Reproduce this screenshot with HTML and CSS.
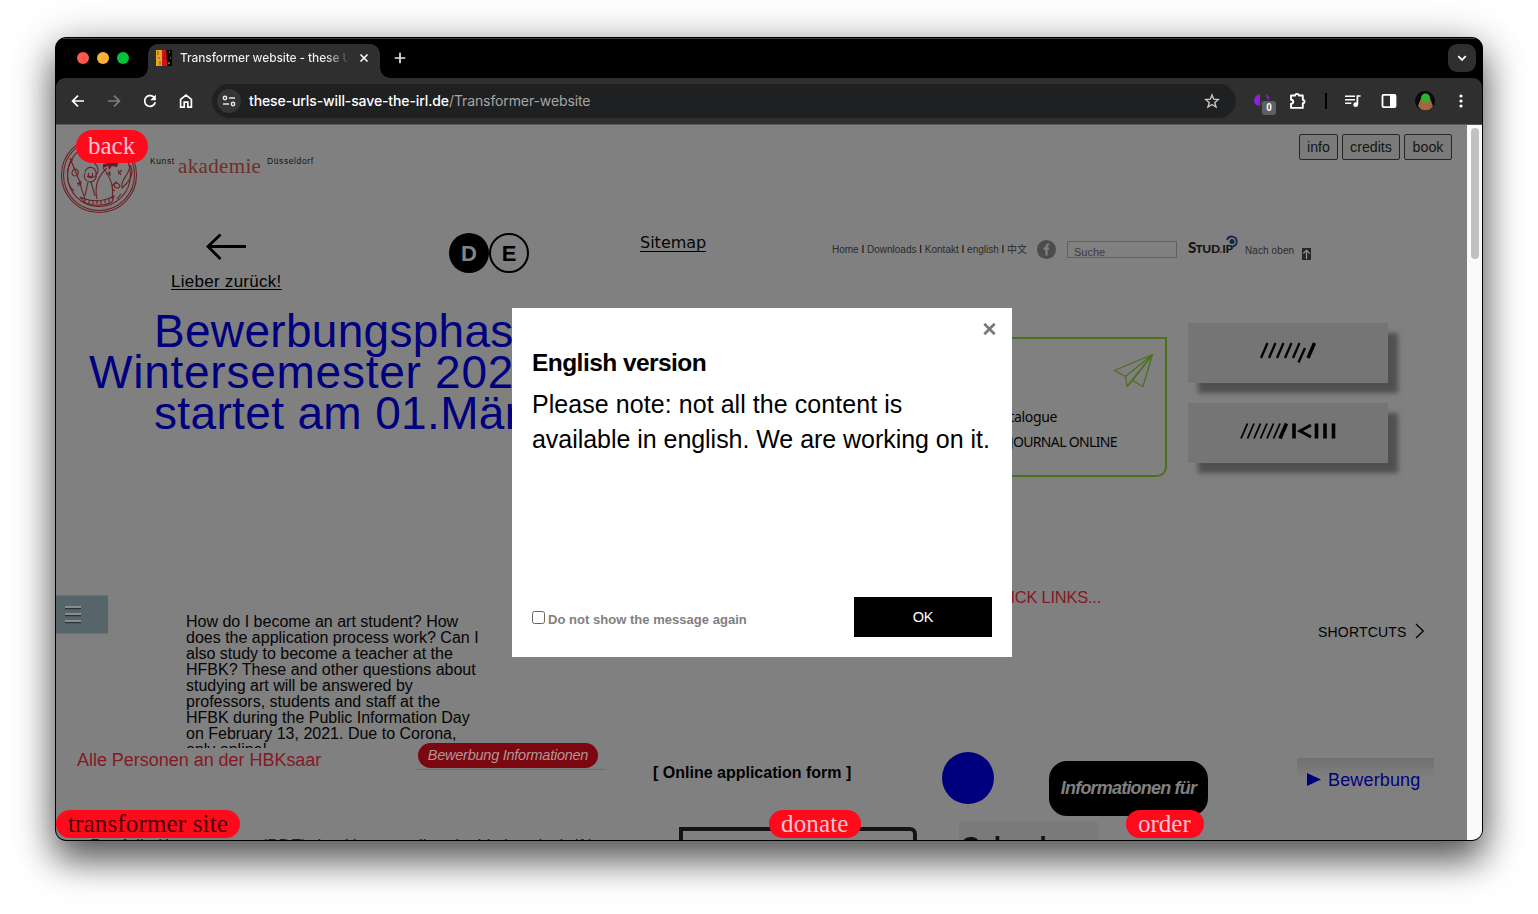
FILE: index.html
```html
<!DOCTYPE html>
<html lang="de">
<head>
<meta charset="utf-8">
<title>Transformer website</title>
<link rel="stylesheet" href="styles.css">
</head>
<body>
<div class="window">
  <header class="tabs">
    <div class="lights"><i class="red"></i><i class="yellow"></i><i class="green"></i></div>
    <div class="tab">
      <svg class="favicon" width="16" height="16" viewBox="0 0 16 16"><path fill="#e8a723" d="M0 0h6v16H0z"/><path fill="#d3111c" d="M6 0h5v16H6z"/><path fill="#600" d="M10 0h1v10h-1z"/><path fill="#000" d="M11 0h5v16h-5z"/><path d="M2 1v4M4 11v4M3 7v2" stroke="#8d4b10"/><path d="M8 3h1M7 8h2" stroke="#7c0b10"/><path d="M13 2h1M12 13h2M14 8h1" stroke="#bbb"/></svg>
      <span class="tab-title">Transformer website - these U</span>
      <svg class="tab-close" width="10" height="10" viewBox="0 0 10 10"><path d="M1.500 1.500l7 7M8.500 1.500l-7 7" stroke="#fff" stroke-width="1.600"/></svg>
    </div>
    <svg class="plus" width="12" height="12" viewBox="0 0 12 12"><path d="M6 .8v10.400M.8 6h10.400" stroke="#e6e6e6" stroke-width="1.700"/></svg>
    <div class="tab-search"><svg width="10" height="7" viewBox="0 0 10 7"><path d="M1.200 1.200L5 5l3.800-3.800" fill="none" stroke="#fff" stroke-width="1.800"/></svg></div>
  </header>
  <nav class="toolbar">
    <svg class="nav-icon" width="16" height="16" viewBox="0 0 16 16"><path d="M14 8H3M8 2.600L2.600 8 8 13.400" fill="none" stroke="#fff" stroke-width="1.700"/></svg>
    <svg class="nav-icon" width="16" height="16" viewBox="0 0 16 16"><path d="M2 8h11M8 2.600L13.400 8 8 13.400" fill="none" stroke="#7d7d7d" stroke-width="1.700"/></svg>
    <svg class="nav-icon" width="16" height="16" viewBox="0 0 16 16"><path d="M12.600 5A5.400 5.400 0 1 0 13.300 9.200" fill="none" stroke="#fff" stroke-width="1.800"/><path d="M13.900 1.600v5.600H8.300z" fill="#fff"/></svg>
    <svg class="nav-icon" width="16" height="16" viewBox="0 0 16 16"><path d="M2.600 14.200V6.300L8 2l5.400 4.300v7.900H9.800V9.200H6.200v5z" fill="none" stroke="#fff" stroke-width="1.700"/></svg>
    <div class="address">
      <span class="site-info"><svg width="14" height="12" viewBox="0 0 14 12"><g fill="none" stroke="#e4e4e4" stroke-width="1.500"><circle cx="3" cy="3" r="1.700"/><path d="M7 3h6M1 9h6"/><circle cx="11" cy="9" r="1.700"/></g></svg></span>
      <span class="url"><b>these-urls-will-save-the-irl.de</b>/Transformer-website</span>
      <svg class="star" width="16" height="16" viewBox="0 0 16 16"><path d="M8 1.900l1.700 4.300 4.700.3-3.600 3 1.200 4.500L8 11.500 4 14l1.200-4.500-3.600-3 4.700-.3z" fill="none" stroke="#c7c7c7" stroke-width="1.400"/></svg>
    </div>
    <div class="extensions">
      <span class="ext"><svg width="17" height="14" viewBox="0 0 17 14"><path fill="#8f1fd6" d="M6 1v12C2.500 13 0 10.800 0 7.600S2.500 2 6 1zM7.500 7l2 5.500h-2zM11.500 1c2.500 1.200 4 3 4 6L13.500 6z"/></svg><em>0</em></span>
      <svg width="18" height="18" viewBox="0 0 18 18"><path d="M2 3.500h4.200c0-2.200 3.600-2.200 3.600 0h4v4.400c2.300 0 2.300 3.200 0 3.200v4.800H2v-4.200c3-.1 3-3.900 0-4z" fill="none" stroke="#fff" stroke-width="1.900" stroke-linejoin="round"/></svg>
      <i class="divider"></i>
      <svg width="16" height="13" viewBox="0 0 16 13"><path d="M0 1.200h10M0 4.700h10M0 8.200h6.300" stroke="#fff" stroke-width="1.600"/><path d="M12.200 1h3.400M12.400.300v9" stroke="#fff" stroke-width="1.700"/><circle cx="10.700" cy="9.700" r="2.400" fill="#fff"/></svg>
      <svg width="16" height="16" viewBox="0 0 16 16"><rect x="1.500" y="1.900" width="13" height="12.200" rx="1" fill="none" stroke="#fff" stroke-width="1.800"/><path d="M9 2h5v12H9z" fill="#fff"/></svg>
      <svg width="20" height="20" viewBox="0 0 20 20"><circle cx="10" cy="10" r="10" fill="#080808"/><path d="M3 15c2-6 4-11 8-11 4 1 5 6 7 11-3 6-12 6-15 0z" fill="#96693f"/><circle cx="10.500" cy="7" r="4.500" fill="#2cb52a"/><path d="M5 15l6-3 5 2M6 17l8-1M8 12l5 5" stroke="#bd6250" fill="none"/></svg>
      <svg width="4" height="14" viewBox="0 0 4 14"><g fill="#fff"><circle cx="2" cy="2" r="1.600"/><circle cx="2" cy="7" r="1.600"/><circle cx="2" cy="12" r="1.600"/></g></svg>
    </div>
  </nav>
  <main class="viewport">
    <div class="collage">
      <svg class="item seal" width="78" height="78" viewBox="0 0 78 78"><g fill="none" stroke="#6d2024" stroke-width="1.100"><circle cx="39" cy="39" r="37.500"/><circle cx="39" cy="39" r="35.500"/><circle cx="39" cy="39" r="31.500"/><path d="M18 17c10 6 18 8 20 16 0 9-8 10-11 7M10 22l11 27M13 23c-8 10-7 26 1 32M25 37a6 6 0 1 0 11 1 5.500 5.500 0 0 0-11-2M29 37a2.200 2.200 0 1 0 3 0M43 32c7 8 11 19 9 31M47 32c-9 8-13 18-10 31M21 45c-2 6 2 10 4 18M28 46l-3 14M31 46l4 14M70 29c5 8 0 16-8 23-2-9 8-13 8-23M57 46a3 3 0 1 0 3 4 4 4 0 1 0-5 5M46 38l5-1M49 35l1 5M17 47l4 2M20 45l-2 5M58 34l3 5M62 34l-4 4M57 63l4-5M20 61c11 5 23 5 34-1l-2 6c-8 4-18 4-27 1zM25 63v4M29 64v4M33 64v4M37 64v4M41 64v4M45 63v4M49 62v4M13 34c5-4 8 6 2 6-3 0-4-3-2-6"/></g><path d="M43 28l16-3-2 6-5-1-3 4-1-4-5 2z" fill="#6d1a20"/></svg>
      <span class="item kunst">Kunst</span>
      <span class="item akademie">akademie</span>
      <span class="item duesseldorf">Düsseldorf</span>
      <div class="item page-buttons"><button class="b-info">info</button><button class="b-credits">credits</button><button class="b-book">book</button></div>

      <svg class="item arrow" width="42" height="28" viewBox="0 0 42 28"><path d="M41 13.500H3M15.500 1.500L3 13.500l12.500 12.500" fill="none" stroke="#000" stroke-width="2.800"/></svg>
      <a class="item lieber">Lieber zurück!</a>
      <span class="item letter letter-d">D</span>
      <span class="item letter letter-e">E</span>
      <a class="item sitemap">Sitemap</a>

      <span class="item meta-nav">Home <b>I</b> Downloads <b>I</b> Kontakt <b>I</b> english <b>I</b> 中文</span>
      <svg class="item facebook" width="20" height="20" viewBox="0 0 20 20"><circle cx="10.500" cy="10.500" r="9.500" fill="#4c4c4c"/><path d="M10.500 16.500V7.700c0-1.800.7-2.300 2.700-2.200M7.500 9.700h5.300" fill="none" stroke="#808080" stroke-width="2.200"/></svg>
      <div class="item suche">Suche</div>
      <span class="item studip">S<small>TUD<i>.</i>IP</small></span>
      <svg class="item studip-dot" width="14" height="14" viewBox="0 0 14 14"><circle cx="7" cy="6.500" r="2.500" fill="#142848"/><path d="M2 5A5 5 0 1 1 7.500 11.500" fill="none" stroke="#142848" stroke-width="1.800"/></svg>
      <span class="item nach-oben">Nach oben</span>
      <svg class="item up" width="9" height="12" viewBox="0 0 9 12"><path fill="#272727" d="M0 0h9v12H0z"/><path d="M4.500 11V3M1.300 5.500l3.200-3.300 3.200 3.300" fill="none" stroke="#999" stroke-width="1.100"/></svg>

      <h1 class="item headline"><span class="l1">Bewerbungsphase</span><span class="l2">Wintersemester 2021</span><span class="l3">startet am 01.März</span></h1>

      <section class="item catalogue">
        <span class="cat-plane"><svg width="41" height="36" viewBox="0 0 41 36"><path d="M39.500 1.500L1.500 17.500l11 6zM39.500 1.500l-9.500 32-10.500-6zM12.500 23.500l1.500 10 25.500-32M14 33.500l5.500-6" fill="none" stroke="#4c701b" stroke-width="1.300" stroke-linejoin="round"/></svg></span>
        <span class="cat-a">Catalogue</span><span class="cat-b">JOURNAL ONLINE</span>
      </section>
      <div class="item slab slab-a"><svg width="58" height="22" viewBox="0 0 58 22"><path d="M2 17L8.500 2M10 17l6.500-15M18 17l6.500-15M26 17l6.500-15M34 17l6.500-15M39.500 21.500L46 7" stroke="#000" stroke-width="2.300"/><path d="M49 17l6.500-15" stroke="#000" stroke-width="3.400"/></svg></div>
      <div class="item slab slab-b"><svg width="96" height="18" viewBox="0 0 96 18"><path d="M1 16.500L7.500 1.500M7.500 16.500l6.500-15M14 16.500l6.500-15M20.500 16.500l6.500-15M27 16.500l6.500-15M33.500 16.500L40 1.500" stroke="#000" stroke-width="1.800"/><path d="M40 16.500l6.500-15M54 1.500v15M76.500 1.500v15M85 1.500v15M93.500 1.500v15" stroke="#000" stroke-width="3.600"/><path d="M71 3L60 9l11 6" fill="none" stroke="#000" stroke-width="3"/></svg></div>

      <svg class="item burger" width="52" height="39" viewBox="0 0 52 39"><path fill="#56656a" d="M0 .5h52v38H0z"/><path d="M9 13.500h16M9 20.500h16M9 27.500h16" stroke="#2d3336" stroke-width="1.500"/><path d="M9 12h16M9 19h16M9 26h16" stroke="#9a9c9d" stroke-width="1.600"/></svg>
      <p class="item story">How do I become an art student? How<br>does the application process work? Can I<br>also study to become a teacher at the<br>HFBK? These and other questions about<br>studying art will be answered by<br>professors, students and staff at the<br>HFBK during the Public Information Day<br>on February 13, 2021. Due to Corona,<br>only online!</p>
      <span class="item quick">QUICK LINKS...</span>
      <span class="item shortcuts">SHORTCUTS</span>
      <svg class="item chevron" width="10" height="16" viewBox="0 0 10 16"><path d="M1 1l7.200 7L1 15" fill="none" stroke="#000" stroke-width="1.300"/></svg>
      <span class="item personen">Alle Personen an der HBKsaar</span>
      <div class="item infos-frame"><span class="infos">Bewerbung Informationen</span></div>
      <span class="item form-link">[ Online application form ]</span>
      <i class="item blue-dot"></i>
      <span class="item black-pill">Informationen für</span>
      <span class="item bewerbung"><svg width="14" height="14" viewBox="0 0 14 14"><path fill="#00007f" d="M0 0L14 6.500 0 13z"/></svg><span>Bewerbung</span></span>
      <i class="item black-frame"></i>
      <span class="item calendar">Calendar</span>
      <span class="item cut-line">Portfolio Kommentare (PDF) das Hauptstudium im Verbandschrift)</span>

      <span class="item pill back">back</span>
      <span class="item pill transformer">transformer site</span>
      <span class="item pill donate">donate</span>
      <span class="item pill order">order</span>

      <section class="item modal">
        <span class="close"><svg width="13" height="12" viewBox="0 0 13 12"><path d="M1.300 .8l10.400 10.400M11.700 .8L1.300 11.200" stroke="#777" stroke-width="2.700"/></svg></span>
        <h2>English version</h2>
        <p><span class="p1">Please note: not all the content is</span><br><span class="p2">available in english. We are working on it.</span></p>
        <footer><label><i class="check"></i><span>Do not show the message again</span></label><button>OK</button></footer>
      </section>
    </div>
    <div class="scrollbar"><i></i></div>
  </main>
</div>
</body>
</html>
```

FILE: styles.css
```css
* { box-sizing: border-box; }
body { margin: 0; width: 1538px; height: 914px; overflow: hidden; background: #fff; font-family: "Liberation Sans", Arial, sans-serif; padding: 37px 55px; }
.window { width: 1428px; height: 804px; border: 1px solid #000; border-radius: 11px; overflow: hidden; display: flex; flex-direction: column; background: #000; box-shadow: 0 20px 36px rgba(0,0,0,.58), 0 4px 44px rgba(0,0,0,.26); }

.tabs { height: 40px; flex: none; display: flex; align-items: center; background: #000; border-top: 1px solid #404040; padding-bottom: 1px; }
.lights { display: flex; gap: 8px; width: 92px; padding-left: 21px; flex: none; }
.lights i { width: 12px; height: 12px; border-radius: 50%; }
.red { background: #ff5750; }
.yellow { background: #ffb13c; }
.green { background: #05c23d; }
.tab { position: relative; align-self: flex-end; width: 232px; height: 34px; margin-bottom: -1px; background: #2f2f2f; border-radius: 10px 10px 0 0; display: flex; align-items: center; padding: 0 10px 6px 8px; }
.tab::before, .tab::after { content: ""; position: absolute; bottom: 0; width: 10px; height: 10px; }
.tab::before { left: -10px; background: radial-gradient(circle at 0 0, transparent 9.5px, #2f2f2f 10px); }
.tab::after { right: -10px; background: radial-gradient(circle at 100% 0, transparent 9.5px, #2f2f2f 10px); }
.tab-title { margin-left: 8px; width: 167px; overflow: hidden; white-space: nowrap; font: 500 12px/16px Inter, sans-serif; letter-spacing: -.12px; background: linear-gradient(90deg, #f2f2f2 145px, #2f2f2f 171px); -webkit-background-clip: text; background-clip: text; color: transparent; }
.tab-close { margin-left: 12px; }
.plus { margin-left: 14px; }
.tab-search { margin-left: auto; margin-right: 6px; width: 28px; height: 28px; border-radius: 9px; background: #2f2f2f; display: flex; align-items: center; justify-content: center; }

.toolbar { height: 47px; flex: none; background: #2f2f2f; border-radius: 9px 9px 0 0; display: flex; align-items: center; padding-left: 14px; border-bottom: 1px solid #5c5c5c; }
.nav-icon { margin-right: 20px; flex: none; }
.address { width: 1024px; height: 34px; margin-left: -2px; border-radius: 17px; background: #1f2022; display: flex; align-items: center; padding: 0 16px 0 5px; flex: none; margin-right: 18px; }
.site-info { width: 24px; height: 24px; border-radius: 50%; background: #343536; display: flex; align-items: center; justify-content: center; }
.url { margin-left: 8px; font: 400 14px/20px Inter, sans-serif; letter-spacing: -.11px; color: #a6a6a6; }
.url b { font-weight: 500; color: #fff; }
.star { margin-left: auto; }
.extensions { display: grid; grid-template-columns: 27px 38px 17px 37px 35px 37px 35px; align-items: center; justify-items: center; margin-left: -2px; }
.ext { position: relative; width: 23px; height: 22px; padding-top: 3px; display: block; }
.ext em { position: absolute; left: 8px; top: 11px; width: 14px; height: 14px; border-radius: 3px; background: #5d6164; color: #fff; font: bold 10px/14px "Liberation Sans", sans-serif; text-align: center; }
.divider { width: 2px; height: 16px; background: #000; }

.viewport { position: relative; flex: 1; background: #808080; overflow: hidden; display: flex; justify-content: flex-end; }
.scrollbar { position: relative; width: 15px; background: #fafafa; padding: 3px 0 0 4px; }
.scrollbar i { display: block; width: 8px; height: 131px; border-radius: 4px; background: #c1c1c1; }

/* Free collage: its origin is the top left corner of the desktop. */
.collage { position: absolute; left: -56px; top: -125px; width: 1523px; height: 970px; }
.item { position: absolute; white-space: nowrap; line-height: 1; margin: 0; }

.seal { left: 60px; top: 136px; }
.kunst, .duesseldorf { top: 157px; font-size: 8.5px; letter-spacing: .6px; color: #111; }
.kunst { left: 150px; }
.duesseldorf { left: 267px; }
.akademie { left: 178px; top: 156px; font-family: "Liberation Serif", serif; font-size: 21px; letter-spacing: .35px; color: #6f2d2c; }
.page-buttons { right: 71px; top: 134px; display: flex; gap: 4px; }
.page-buttons button { height: 26px; border: 1px solid #262626; border-radius: 2px; background: #7a7a7a; padding: 0; font: 14.2px/1 "Liberation Sans", sans-serif; color: #151515; }
.b-info { width: 39px; }
.b-credits { width: 58px; }
.b-book { width: 48px; }

.arrow { left: 205px; top: 233px; }
.lieber { left: 171px; top: 273px; font-size: 17px; letter-spacing: .27px; text-decoration: underline; text-underline-offset: 2px; }
.letter { top: 233px; width: 40px; height: 40px; border-radius: 50%; text-align: center; font-weight: bold; font-size: 22px; line-height: 41px; }
.letter-d { left: 449px; background: #000; color: #858585; }
.letter-e { left: 489px; border: 2.5px solid #000; line-height: 37px; }
.sitemap { left: 640px; top: 235px; font: 16px/1 "DejaVu Sans", sans-serif; color: #050505; border-bottom: 1px solid #000; height: 17px; }

.meta-nav { left: 832px; top: 244px; font: 10px/11px "Liberation Sans", "Noto Sans CJK SC", sans-serif; color: #2b2b2b; }
.meta-nav b { font-weight: normal; color: #000; }
.facebook { left: 1036px; top: 239px; }
.suche { left: 1067px; top: 241px; width: 110px; height: 17px; border: 1px solid #606060; padding: 5px 0 0 6px; font-size: 11px; color: #3b3b3b; }
.studip { left: 1188px; top: 240px; font: 900 15px/15px Lato, sans-serif; letter-spacing: -.75px; color: #161616; }
.studip small { font-size: 12px; letter-spacing: -.4px; }
.studip i { color: #a01010; }
.studip-dot { left: 1225px; top: 235px; }
.nach-oben { left: 1245px; top: 246px; font-size: 10px; letter-spacing: .1px; color: #2b2b2b; }
.up { left: 1302px; top: 248px; }

.headline { left: 89px; top: 311px; width: 440px; font-size: 46px; line-height: 41px; font-weight: 400; color: #00007f; display: flex; flex-direction: column; }
.l1 { padding-left: 65px; letter-spacing: .3px; }
.l2 { letter-spacing: .75px; }
.l3 { padding-left: 65px; letter-spacing: .35px; }

.catalogue { left: 860px; top: 337px; width: 307px; height: 140px; border: 2px solid #4c701b; border-radius: 0 0 10px 0; font-family: "Noto Sans", sans-serif; font-size: 14px; color: #050505; display: flex; flex-direction: column; align-items: flex-end; padding: 14px 11px 0 0; }
.cat-a { margin: 17px 97px 0 0; line-height: 18px; letter-spacing: -.35px; }
.cat-b { margin: 7px 37px 0 0; line-height: 18px; letter-spacing: -.65px; }
.slab { left: 1188px; width: 200px; height: 60px; background: #757575; box-shadow: 10px 10px 5px #505050; display: flex; justify-content: center; }
.slab-a { top: 323px; padding-top: 18px; }
.slab-b { top: 403px; padding-top: 19px; }

.burger { left: 56px; top: 595px; }
.story { left: 186px; top: 614px; width: 310px; height: 134px; overflow: hidden; font-size: 16px; line-height: 16px; color: #050505; }
.quick { right: 422px; top: 589px; font-size: 16.5px; letter-spacing: -.25px; color: #851824; }
.shortcuts { left: 1318px; top: 625px; font-size: 14px; letter-spacing: .2px; }
.chevron { left: 1415px; top: 623px; }
.personen { left: 77px; top: 751px; font-size: 18px; letter-spacing: -.03px; color: #851824; }
.infos-frame { left: 416px; top: 743px; width: 190px; height: 27px; padding-left: 2px; border-right: 1px solid #8b7679; border-bottom: 1px solid #8b6066; }
.infos { display: block; width: 180px; height: 25px; border-radius: 13px; background: #7b0710; color: #b29698; font: italic 14.5px/24px "Liberation Sans", sans-serif; letter-spacing: -.25px; text-align: center; }
.form-link { left: 653px; top: 765px; font-size: 16px; font-weight: bold; }
.blue-dot { left: 942px; top: 752px; width: 52px; height: 52px; border-radius: 50%; background: #00007f; }
.black-pill { left: 1049px; top: 761px; width: 159px; height: 55px; border-radius: 18px; background: #000; color: #808080; font: italic bold 18px/55px "Liberation Sans", sans-serif; letter-spacing: -.8px; text-align: center; }
.bewerbung { left: 1297px; top: 758px; width: 137px; height: 42px; background: linear-gradient(#707070, #808080 20px); display: flex; align-items: center; gap: 7px; padding: 2px 0 0 10px; font-size: 18px; letter-spacing: .15px; color: #00007f; }
.black-frame { left: 679px; top: 827px; width: 238px; height: 30px; border: 4px solid #141414; border-radius: 0 7px 0 0; }
.calendar { left: 959px; top: 822px; width: 139px; height: 40px; background: #7a7a7a; padding: 11px 0 0 2px; font-size: 26px; font-weight: bold; letter-spacing: -.2px; color: #111; }
.cut-line { left: 90px; top: 837px; font-size: 17px; letter-spacing: .1px; color: #222; }

.pill { font-family: "Liberation Serif", serif; font-size: 25px; height: 28px; line-height: 28px; border-radius: 17px; background: #ff0a1b; color: #ffc4d0; padding: 0 12px; }
.back { left: 76px; top: 130px; width: 72px; height: 33px; line-height: 32px; }
.transformer { left: 56px; top: 810px; width: 184px; letter-spacing: .15px; color: #4d0008; }
.donate { left: 769px; top: 810px; width: 92px; letter-spacing: .15px; }
.order { left: 1126px; top: 810px; width: 78px; }

.modal { left: 512px; top: 308px; width: 500px; height: 349px; background: #fff; padding: 15px 20px 20px; display: flex; flex-direction: column; white-space: nowrap; }
.close { align-self: flex-end; height: 12px; margin-right: -4px; }
.close svg { display: block; }
.modal h2 { margin: 12px 0 0; font-size: 24.5px; line-height: 32px; letter-spacing: -.55px; }
.modal p { margin: 8px 0 0; font-size: 25px; line-height: 35px; }
.p1 { letter-spacing: .06px; }
.p2 { letter-spacing: -.04px; }
.modal footer { margin-top: auto; display: flex; justify-content: space-between; align-items: center; }
.modal label { display: flex; align-items: center; gap: 3px; font-size: 13px; font-weight: bold; letter-spacing: .03px; color: #808080; }
.modal label span { padding-top: 4px; }
.check { width: 13px; height: 13px; border: 1px solid #666; border-radius: 2.5px; background: #fff; }
.modal button { width: 138px; height: 40px; border: 0; border-radius: 0; background: #000; color: #fff; font: 14.5px/1 "Liberation Sans", sans-serif; letter-spacing: -.3px; }
```
